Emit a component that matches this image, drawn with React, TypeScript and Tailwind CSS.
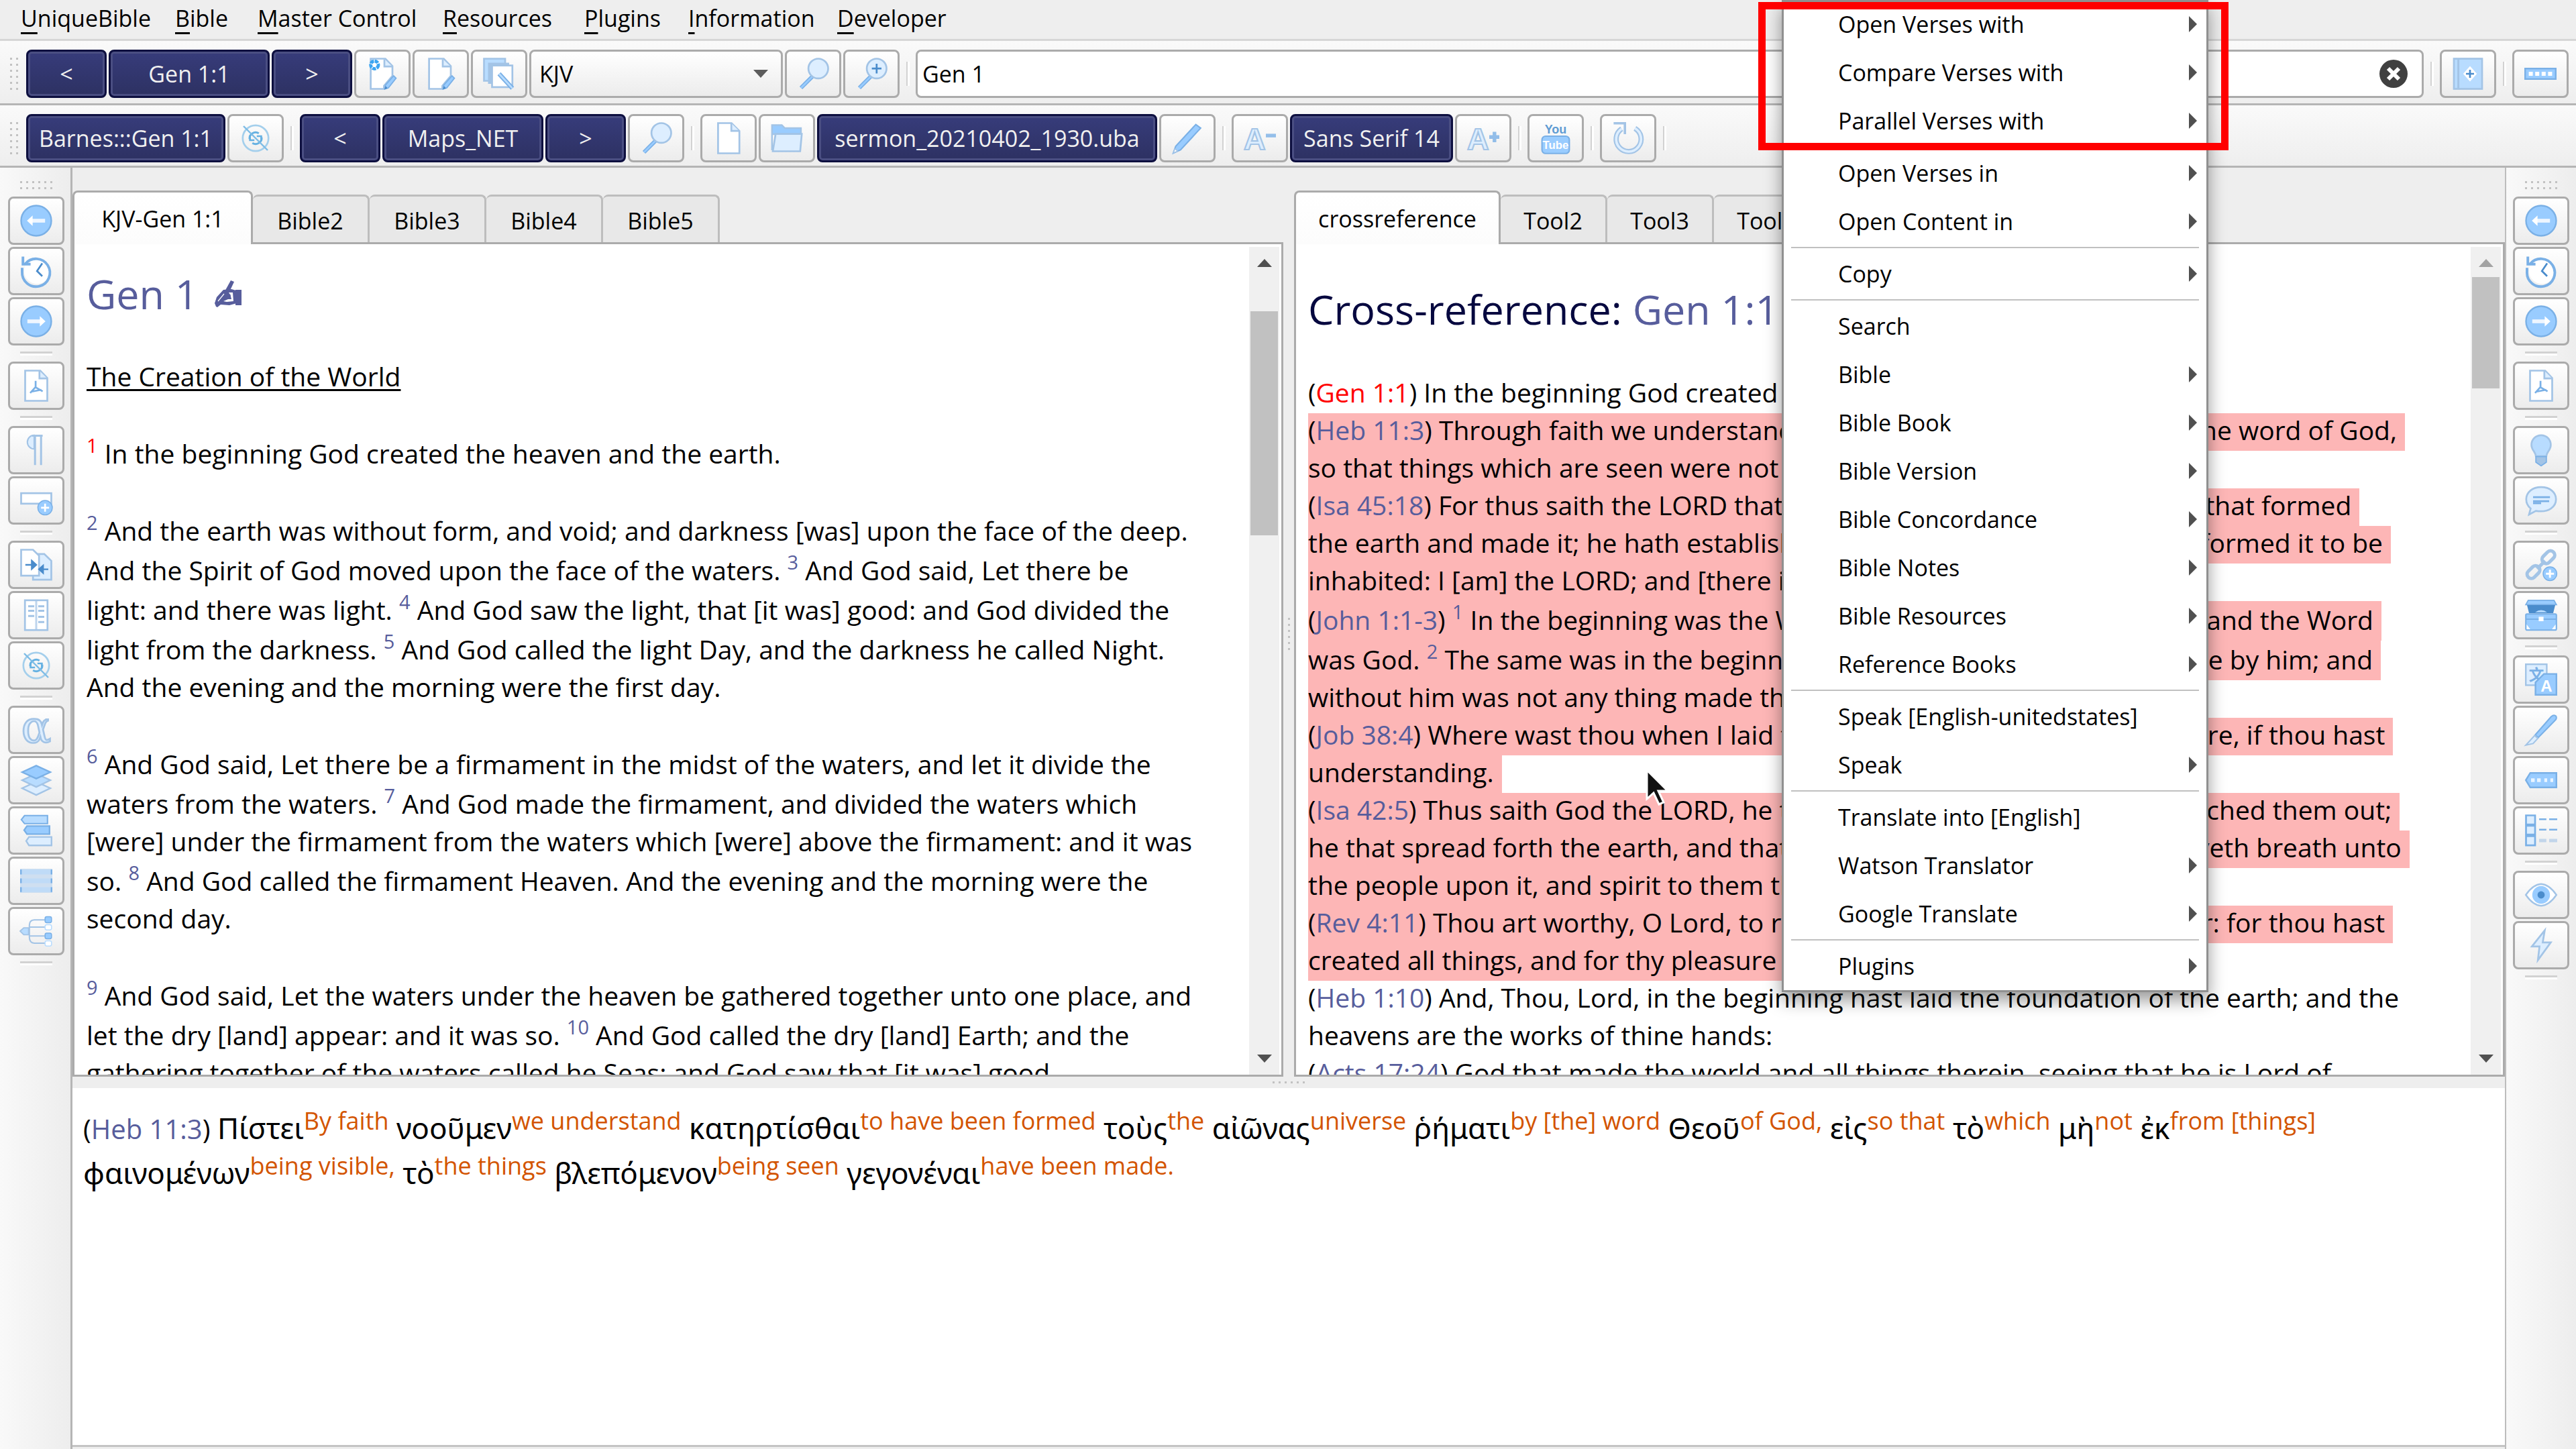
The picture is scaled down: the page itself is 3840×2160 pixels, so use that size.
import React from "react";

const LINE = "#a3c4e6";
const PALE = "#ddeeff";
const MID = "#99ccff";
const SOFT = "#b8dcff";
const DEEP = "#4a8ccc";
const EDGE = "#7ab0e6";

type Kids = { children: React.ReactNode };

function Svg({ children }: Kids) {
  return (
    <svg viewBox="0 0 16 16" className="size-12 overflow-visible" aria-hidden="true">
      {children}
    </svg>
  );
}

const penTip = (
  <>
    <path d="M9.5 13.6 13.6 9 14.8 10.2 11 15 9.2 15.6Z" fill={MID} stroke={EDGE} strokeWidth=".6" />
    <path d="M9 15.8 9.6 14 10.6 15.2Z" fill={DEEP} />
  </>
);

const sheet = (
  <>
    <path d="M2.2.5H9.5L13 4.2V9L8.8 14V15.5H2.2Z" fill="#fff" stroke={LINE} strokeWidth=".9" />
    <path d="M9 .8V4.4H13" fill={PALE} stroke={LINE} strokeWidth=".9" />
  </>
);

const magnifier = (
  <>
    <path d="M7.8 9.2 2 15" stroke={EDGE} strokeWidth="2" />
    <path d="M7.8 9.2 2 15" stroke={MID} strokeWidth=".9" />
    <circle cx="10.6" cy="5.4" r="4.9" fill={PALE} stroke={LINE} strokeWidth=".9" />
  </>
);

const icons: Record<string, React.ReactNode> = {
  noteStar: (
    <Svg>
      {sheet}
      {penTip}
      <circle cx="4.1" cy="3.6" r="1.9" fill="#fff" stroke="#3ba5f2" strokeWidth="1.6" strokeDasharray="1.8 .4" />
    </Svg>
  ),
  note: (
    <Svg>
      {sheet}
      {penTip}
    </Svg>
  ),
  notes: (
    <Svg>
      <path d="M.5.5H11V11.5H.5Z" fill={SOFT} stroke={LINE} strokeWidth=".9" />
      <path d="M2.5 2.5H13V13H2.5Z" fill={LINE} />
      <path d="M4.5 3.9H14.6V14.6H4.5Z" fill="#fff" stroke={LINE} strokeWidth=".9" />
      <path d="M8 8 14.6 15.2" stroke={EDGE} strokeWidth="2.2" />
      <path d="M8 8 14.6 15.2" stroke={SOFT} strokeWidth=".9" />
    </Svg>
  ),
  search: <Svg>{magnifier}</Svg>,
  searchPlus: (
    <Svg>
      {magnifier}
      <path d="M10.6 3V7.8M8.2 5.4H13" stroke={DEEP} strokeWidth=".9" />
    </Svg>
  ),
  sync: (
    <Svg>
      <circle cx="8" cy="8" r="6.4" fill="none" stroke="#a4cfec" strokeWidth=".9" />
      <path d="M5 8.4A3 3 0 0 1 9.6 5.6M11 7.6A3 3 0 0 1 6.4 10.4" fill="none" stroke="#66b1e2" strokeWidth="1" />
      <path d="M5.2 6.6V9H7.4M10.8 9.4V7H8.6" fill="none" stroke="#66b1e2" strokeWidth=".9" />
      <path d="M2 2 14 14" stroke="#7dbce6" strokeWidth=".8" />
    </Svg>
  ),
  file: (
    <Svg>
      <path d="M2.8.5H9.5L13.4 4.4V15.5H2.8Z" fill="#fff" stroke={LINE} strokeWidth=".9" />
      <path d="M9.4.6V4.4H13.3" fill={PALE} stroke={LINE} strokeWidth=".9" />
    </Svg>
  ),
  folder: (
    <Svg>
      <path d="M.6 14V1.5H5.5L7 3H15V6H.6Z" fill={MID} stroke={LINE} strokeWidth=".8" />
      <path d="M2.4 5.9H15.4L14.6 14.5H1Z" fill={PALE} stroke={LINE} strokeWidth=".9" />
    </Svg>
  ),
  pencil: (
    <Svg>
      <path d="M1 15.4 2.2 12 12.2 1.2 14.6 3 4.6 13.8Z" fill={MID} stroke={EDGE} strokeWidth=".7" />
      <path d="M1 15.4 1.8 13.2 3.2 14.4Z" fill="#fff" stroke={LINE} strokeWidth=".5" />
    </Svg>
  ),
  fontDown: (
    <Svg>
      <text x="0" y="13.6" fontFamily="Liberation Sans" fontWeight="700" fontSize="15" fill={PALE} stroke={LINE} strokeWidth=".7">A</text>
      <path d="M11 5.8H16V7.6H11Z" fill={EDGE} opacity=".8" />
    </Svg>
  ),
  fontUp: (
    <Svg>
      <text x="0" y="13.6" fontFamily="Liberation Sans" fontWeight="700" fontSize="15" fill={PALE} stroke={LINE} strokeWidth=".7">A</text>
      <path d="M13.6 4.8V10M11 7.4H16" stroke={EDGE} strokeWidth="1.8" opacity=".8" />
    </Svg>
  ),
  youtube: (
    <Svg>
      <text x="8" y="5.6" textAnchor="middle" fontFamily="Liberation Sans" fontWeight="700" fontSize="6" fill="#5f9cd3">You</text>
      <rect x="1.2" y="7" width="13.6" height="8.6" rx="1.8" fill={MID} stroke={EDGE} strokeWidth=".7" />
      <text x="8" y="13.4" textAnchor="middle" fontFamily="Liberation Sans" fontWeight="700" fontSize="5.6" fill="#fff">Tube</text>
    </Svg>
  ),
  reload: (
    <Svg>
      <path d="M4.8 3.3A6.2 6.2 0 1 0 11.4 3.1" fill="none" stroke={LINE} strokeWidth="2.6" />
      <path d="M4.8 3.3A6.2 6.2 0 1 0 11.4 3.1" fill="none" stroke={PALE} strokeWidth="1.2" />
      <path d="M.8.6H6.4V6" fill="none" stroke={LINE} strokeWidth="1.2" />
    </Svg>
  ),
  bookPlus: (
    <Svg>
      <rect x="1" y=".5" width="14" height="15" fill={SOFT} stroke={LINE} strokeWidth=".9" />
      <path d="M3.2.5V15.5" stroke={LINE} strokeWidth="1" />
      <path d="M9 4.2 12.4 8 9 11.8 5.6 8Z" fill="#fff" />
      <path d="M9 6V10M7 8H11" stroke={DEEP} strokeWidth=".9" />
    </Svg>
  ),
  toolbar: (
    <Svg>
      <rect x=".4" y="5.4" width="15.2" height="5.2" fill={MID} stroke={EDGE} strokeWidth=".8" />
      <path d="M2.2 7H4.2V9H2.2ZM5.4 7H7.4V9H5.4ZM8.6 7H10.6V9H8.6ZM11.8 7H13.8V9H11.8Z" fill="#fff" />
    </Svg>
  ),
  back: (
    <Svg>
      <circle cx="8" cy="8" r="7.5" fill={MID} stroke={EDGE} strokeWidth=".8" />
      <path d="M12.4 8H5" stroke="#eef6ff" strokeWidth="1.9" />
      <path d="M6.2 5.4V10.6L3.4 8Z" fill="#fff" />
    </Svg>
  ),
  forward: (
    <Svg>
      <circle cx="8" cy="8" r="7.5" fill={MID} stroke={EDGE} strokeWidth=".8" />
      <path d="M3.6 8H11" stroke="#eef6ff" strokeWidth="1.9" />
      <path d="M9.8 5.4V10.6L12.6 8Z" fill="#fff" />
    </Svg>
  ),
  history: (
    <Svg>
      <circle cx="8.4" cy="8" r="6.4" fill="#fff" />
      <path d="M2.6 4.4A6.9 6.9 0 1 1 1 8.4V6.4" fill="none" stroke={EDGE} strokeWidth="1.3" />
      <path d="M1.4.8V4.6H5.2" fill="none" stroke={EDGE} strokeWidth="1.3" />
      <path d="M11 4.2 8.4 8 11 10.6" fill="none" stroke={DEEP} strokeWidth=".9" />
    </Svg>
  ),
  pdf: (
    <Svg>
      <path d="M2.5.5H10L13.5 4.2V15.5H2.5Z" fill="#fff" stroke={LINE} strokeWidth=".9" />
      <path d="M9.6.6V4.4H13.5" fill={PALE} stroke={LINE} strokeWidth=".9" />
      <path d="M7.7 5.6V8.6L5 11.6M7.7 8.8 11.2 10.8M5.4 11 10.6 10" fill="none" stroke={EDGE} strokeWidth=".9" />
    </Svg>
  ),
  pilcrow: (
    <Svg>
      <path d="M7 .6A3.4 3.4 0 0 0 7 7.4Z" fill={PALE} stroke={LINE} strokeWidth=".7" />
      <path d="M6 .8H11.2M7.4.6V15.4M10.4.6V15.4" fill="none" stroke={LINE} strokeWidth="1" />
    </Svg>
  ),
  rowPlus: (
    <Svg>
      <rect x=".5" y="4.4" width="15" height="5.2" fill="#fff" stroke={LINE} strokeWidth=".9" />
      <circle cx="12.4" cy="11.6" r="3.6" fill={MID} stroke={EDGE} strokeWidth=".5" />
      <path d="M12.4 9.6V13.6M10.4 11.6H14.4" stroke="#fff" strokeWidth=".9" />
    </Svg>
  ),
  swapPages: (
    <Svg>
      <path d="M6.4 2.6H12L15.5 6V15.4H6.4Z" fill={PALE} stroke={LINE} strokeWidth=".9" />
      <path d="M.5.5H6.4L9.4 3.4V13.4H.5Z" fill="#fff" stroke={LINE} strokeWidth=".9" />
      <path d="M2.6 8H7M5.8 6 8 8 5.8 10ZM14 10.2H11M11.4 8.4 9.4 10.2 11.4 12Z" fill={DEEP} stroke={DEEP} strokeWidth=".8" />
    </Svg>
  ),
  columns: (
    <Svg>
      <rect x="2.4" y=".6" width="11.2" height="14.8" fill="#fff" stroke={LINE} strokeWidth=".9" />
      <path d="M8 .6V15.4" stroke={LINE} strokeWidth="1" opacity=".7" />
      <path d="M4 3.6H7M4 5.8H7M4 8.4H7M9 3.6H12M9 5.8H12M9 8.8H12M9 11.4H12" stroke={LINE} strokeWidth="1" />
    </Svg>
  ),
  alpha: (
    <Svg>
      <text x="8" y="14.4" textAnchor="middle" fontFamily="DejaVu Serif" fontSize="22" fill={PALE} stroke={LINE} strokeWidth=".9">α</text>
    </Svg>
  ),
  layers: (
    <Svg>
      <path d="M1 12 8 8.8 15 12 8 15.4Z" fill={PALE} stroke={LINE} strokeWidth=".8" />
      <path d="M1 8 8 4.8 15 8 8 11.4Z" fill={SOFT} stroke={LINE} strokeWidth=".8" />
      <path d="M1 4 8 .8 15 4 8 7.2Z" fill={MID} stroke={EDGE} strokeWidth=".8" />
    </Svg>
  ),
  tags: (
    <Svg>
      <path d="M.6 2.6 2.2.6H13.6V4.6H2.2Z" fill={SOFT} stroke={EDGE} strokeWidth=".7" />
      <path d="M2 7.8 3.4 5.8H14.6V9.8H3.4Z" fill={MID} stroke={EDGE} strokeWidth=".8" />
      <path d="M3 13.2 4.4 11.2H15.6V15.4H4.4Z" fill={PALE} stroke={LINE} strokeWidth=".8" />
    </Svg>
  ),
  rows: (
    <Svg>
      <rect x="0" y="2" width="16" height="12" fill="#cfdff0" />
      <path d="M0 3.6H16M0 8H16M0 12.4H16" stroke="#bfdbf7" strokeWidth="2.4" />
      <path d="M.4 2.4V4.8M.4 6.8V9.2M.4 11.2V13.6M15.6 2.4V4.8M15.6 6.8V9.2M15.6 11.2V13.6" stroke={EDGE} strokeWidth=".8" />
    </Svg>
  ),
  tree: (
    <Svg>
      <path d="M4 8H4.6M13 2.4H7Q4.6 2.6 4.6 5V11Q4.6 13.8 7 14H13M4.6 6H13M4.6 10.4H13" fill="none" stroke={LINE} strokeWidth=".7" />
      <path d="M0 8 1.8 6.4H4.2V9.8H1.8Z" fill={SOFT} stroke={LINE} strokeWidth=".6" />
      <rect x="12.4" y=".8" width="3.2" height="3" rx=".8" fill={MID} stroke={EDGE} strokeWidth=".5" />
      <rect x="12.4" y="4.8" width="3.2" height="2.6" rx=".8" fill="#fff" stroke={SOFT} strokeWidth=".5" />
      <rect x="12.4" y="9" width="3.2" height="2.8" rx=".8" fill={MID} stroke={EDGE} strokeWidth=".5" />
      <rect x="12.4" y="12.8" width="3.2" height="2.6" rx=".8" fill="#fff" stroke={SOFT} strokeWidth=".5" />
    </Svg>
  ),
  bulb: (
    <Svg>
      <path d="M8 .6A4.7 4.7 0 0 0 3.2 5.4C3.2 8 5.2 8.8 5.4 11H10.6C10.8 8.8 12.8 8 12.8 5.4A4.7 4.7 0 0 0 8 .6Z" fill={SOFT} stroke={LINE} strokeWidth=".9" />
      <path d="M5.4 11.2H10.6V14L8 15.8 5.4 14Z" fill={LINE} stroke={EDGE} strokeWidth=".6" />
    </Svg>
  ),
  comment: (
    <Svg>
      <path d="M8 1.4C3.6 1.4.6 4 .6 7.4 .6 9.6 1.6 11 2.8 12L2 15 5.4 13.2C12 14.2 15.4 11 15.4 7.4 15.4 4 12.4 1.4 8 1.4Z" fill={PALE} stroke={LINE} strokeWidth=".9" />
      <path d="M4 6.4H12.4M4 8.4H12M4 9.4H8" stroke={EDGE} strokeWidth=".9" />
    </Svg>
  ),
  linkPlus: (
    <Svg>
      <g fill="none" stroke={LINE} strokeWidth="1.7">
        <rect x="-3.6" y="-2.1" width="7.2" height="4.2" rx="2.1" transform="translate(11.6 4.2) rotate(-45)" />
        <rect x="-3.6" y="-2.1" width="7.2" height="4.2" rx="2.1" transform="translate(4.2 11.6) rotate(-45)" />
        <path d="M6 10 10 6" />
      </g>
      <circle cx="12.4" cy="12.4" r="3.4" fill={MID} stroke={EDGE} strokeWidth=".5" />
      <path d="M12.4 10.4V14.4M10.4 12.4H14.4" stroke="#fff" strokeWidth="1" />
    </Svg>
  ),
  chest: (
    <Svg>
      <path d="M1.6.6H14.4L15.6 2.8H.4Z" fill={MID} stroke={EDGE} strokeWidth=".6" />
      <path d="M1 3H15L14 7H2Z" fill={DEEP} />
      <path d="M5 6.6Q8 4.4 11 6.6Z" fill={SOFT} />
      <rect x=".4" y="7.4" width="15.2" height="8" rx=".6" fill={MID} stroke={EDGE} strokeWidth=".7" />
      <path d="M.4 10H15.6" stroke={EDGE} strokeWidth=".7" />
      <rect x="6.8" y="8.8" width="2.4" height="2.2" fill="#fff" />
      <path d="M.8 12.6 2.6 15H.8ZM15.2 12.6 13.4 15H15.2Z" fill="#fff" />
    </Svg>
  ),
  translate: (
    <Svg>
      <rect x=".4" y=".4" width="10.4" height="10.4" fill={PALE} stroke={LINE} strokeWidth=".8" />
      <text x="5.6" y="8.4" textAnchor="middle" fontFamily="Noto Sans CJK SC" fontSize="7.6" fontWeight="700" fill={EDGE}>文</text>
      <path d="M5.2 9.4 9.4 5.2H15.6V15.6H5.2Z" fill={MID} stroke={EDGE} strokeWidth=".8" />
      <text x="10.6" y="14" textAnchor="middle" fontFamily="Liberation Sans" fontSize="8" fontWeight="700" fill="#fff">A</text>
    </Svg>
  ),
  brush: (
    <Svg>
      <path d="M5 10.6 13 1.4Q14.4.2 15.4 1.2 16 2.4 14.8 3.4L6.6 11.8Z" fill={MID} stroke={EDGE} strokeWidth=".7" />
      <path d="M4.8 10.8 6.4 12.2 4 14.8.4 15.6Z" fill={PALE} stroke={LINE} strokeWidth=".7" />
    </Svg>
  ),
  label: (
    <Svg>
      <path d="M.4 8 2.6 4.4H15.6V11.6H2.6Z" fill={MID} stroke={EDGE} strokeWidth=".8" />
      <path d="M3 7.1H4.8V8.9H3ZM6 7.1H7.8V8.9H6ZM9.6 7.1H11V8.9H9.6ZM12.6 7.1H14V8.9H12.6Z" fill="#eaf5ff" />
    </Svg>
  ),
  list: (
    <Svg>
      <path d="M.5.5H5V5H.5ZM.5 5.6H5V10H.5ZM.5 10.8H5V15.4H.5Z" fill={PALE} stroke={EDGE} strokeWidth=".9" />
      <path d="M7 2.4H10.6M12 2.4H16M7 7.6H10.6M12 7.6H16" stroke={EDGE} strokeWidth=".8" />
      <path d="M7 13H10.6M12 13H16" stroke={LINE} strokeWidth="1.6" opacity=".6" />
    </Svg>
  ),
  eye: (
    <Svg>
      <path d="M.4 8Q4 2.8 8 2.6 12 2.8 15.6 8 12 13.2 8 13.4 4 13.2.4 8Z" fill="#fff" stroke={LINE} strokeWidth=".8" />
      <circle cx="8" cy="8" r="4.4" fill={MID} />
      <circle cx="8" cy="8" r="1.8" fill={DEEP} />
    </Svg>
  ),
  flash: (
    <Svg>
      <path d="M9.8.6 3.4 8.6H7.2L6.4 15.4 12.8 6.6H8.8Z" fill={PALE} stroke={LINE} strokeWidth=".9" />
    </Svg>
  ),
};

function IconButton({ name, label }: { name: string; label: string }) {
  return (
    <button
      aria-label={label}
      className="flex h-[72px] w-[84px] shrink-0 items-center justify-center rounded-lg border-[3px] border-[#ababab] bg-linear-to-b from-white to-[#ececec]"
    >
      {icons[name]}
    </button>
  );
}

function DarkButton({ children, className }: Kids & { className: string }) {
  return (
    <button
      className={`h-[72px] shrink-0 rounded-lg border-[3px] border-[#0d0f3f] bg-linear-to-b from-[#373c7b] to-[#2d3162] whitespace-nowrap text-[#f0f0f0] inset-ring-[3px] inset-ring-[#4a4e82] ${className}`}
    >
      {children}
    </button>
  );
}

function VSep() {
  return (
    <div className="flex h-9 w-[18px] shrink-0 justify-center">
      <div className="w-[2px] bg-[#d2d2d2]" />
      <div className="w-[3px] bg-white" />
    </div>
  );
}

function HSep() {
  return (
    <div className="flex h-[18px] flex-col items-center justify-center">
      <div className="h-[3px] w-12 bg-[#d2d2d2]" />
      <div className="h-[3px] w-12 bg-white" />
    </div>
  );
}

function Dots({ cols, rows }: { cols: number; rows: number }) {
  return (
    <div className="flex flex-col gap-[6px]">
      {Array.from({ length: rows }, (_, r) => (
        <div key={r} className="flex gap-[6px]">
          {Array.from({ length: cols }, (_, c) => (
            <div key={c} className="size-[3px] bg-[#c2c2c2]" />
          ))}
        </div>
      ))}
    </div>
  );
}

const menus: [string, string][] = [
  ["UniqueBible", "w-[230px]"],
  ["Bible", "w-[123px]"],
  ["Master Control", "w-[276px]"],
  ["Resources", "w-[211px]"],
  ["Plugins", "w-[155px]"],
  ["Information", "w-[222px]"],
  ["Developer", "w-[212px]"],
];

const leftBar: [string, string][] = [
  ["back", "Previous chapter"],
  ["history", "Bible history"],
  ["forward", "Next chapter"],
  ["", ""],
  ["pdf", "Export Bible view to PDF"],
  ["", ""],
  ["pilcrow", "Paragraph view"],
  ["rowPlus", "Subheadings"],
  ["", ""],
  ["swapPages", "Synchronise panes"],
  ["columns", "Parallel view"],
  ["sync", "Reference sync"],
  ["", ""],
  ["alpha", "Original language"],
  ["layers", "Interlinear"],
  ["tags", "Morphology"],
  ["rows", "Compare rows"],
  ["tree", "Translation tree"],
  ["", ""],
];

const rightBar: [string, string][] = [
  ["back", "Previous study"],
  ["history", "Study history"],
  ["forward", "Next study"],
  ["", ""],
  ["pdf", "Export study view to PDF"],
  ["", ""],
  ["bulb", "Indexes"],
  ["comment", "Commentary"],
  ["", ""],
  ["linkPlus", "Cross-references"],
  ["chest", "Treasury"],
  ["", ""],
  ["translate", "Translations"],
  ["brush", "Discourse"],
  ["label", "Words"],
  ["list", "Combined features"],
  ["", ""],
  ["eye", "Highlight"],
  ["flash", "Instant lookup"],
  ["", ""],
];

function SideBar({ items, className, label }: { items: [string, string][]; className: string; label: string }) {
  return (
    <aside
      aria-label={label}
      className={`flex shrink-0 flex-col items-center gap-[3px] bg-linear-to-r from-[#f9f9f9] to-[#ededed] pt-5 ${className}`}
    >
      <div className="mb-2">
        <Dots cols={6} rows={2} />
      </div>
      {items.map(([name, text], i) => (name ? <IconButton key={i} name={name} label={text} /> : <HSep key={i} />))}
    </aside>
  );
}

function Tabs({ tabs, first, rest }: { tabs: string[]; first: string; rest: string }) {
  return (
    <div role="tablist" className="relative z-10 -mb-[3px] flex h-20 items-end">
      <button
        role="tab"
        aria-selected="true"
        className={`h-20 rounded-t-lg border-[3px] border-b-0 border-[#ababab] bg-linear-to-b from-white to-[#fcfcfc] ${first}`}
      >
        {tabs[0]}
      </button>
      {tabs.slice(1).map((t) => (
        <button
          key={t}
          role="tab"
          aria-selected="false"
          className={`mb-[3px] h-[71px] rounded-t-lg border-t-[3px] border-r-[3px] border-[#bdbdbd] bg-[#e8e8e8] pt-1 ${rest}`}
        >
          {t}
        </button>
      ))}
    </div>
  );
}

function ScrollBar({ lead, thumb, dim }: { lead: string; thumb: string; dim?: boolean }) {
  return (
    <div className="mt-1 mr-[3px] flex w-[45px] shrink-0 flex-col items-center bg-[#f0f0f0]">
      <svg viewBox="0 0 22 12" className="mt-[18px] h-3 w-[22px] shrink-0">
        <path d="M0 12 11 0 22 12Z" fill={dim ? "#a3a3a3" : "#505050"} />
      </svg>
      <div className={`w-[41px] shrink-0 bg-[#c1c1c1] ${lead} ${thumb}`} />
      <svg viewBox="0 0 22 12" className="mt-auto mb-[18px] h-3 w-[22px] shrink-0">
        <path d="M0 0H22L11 12Z" fill="#505050" />
      </svg>
    </div>
  );
}

function Sup({ children, red }: Kids & { red?: boolean }) {
  return (
    <span className={`align-[16px] text-[29px] leading-[24px] ${red ? "text-[#ff0000]" : "text-[#575d9c]"}`}>{children}</span>
  );
}

function Ref({ children, red }: Kids & { red?: boolean }) {
  return (
    <>
      (
      <a href="#ref" className={red ? "text-[#ff0000]" : "text-[#575d9c]"}>
        {children}
      </a>
      )
    </>
  );
}

const verses: React.ReactNode[][] = [
  [<><Sup red>1</Sup> In the beginning God created the heaven and the earth.</>],
  [
    <><Sup>2</Sup> And the earth was without form, and void; and darkness [was] upon the face of the deep.</>,
    <>And the Spirit of God moved upon the face of the waters. <Sup>3</Sup> And God said, Let there be</>,
    <>light: and there was light. <Sup>4</Sup> And God saw the light, that [it was] good: and God divided the</>,
    <>light from the darkness. <Sup>5</Sup> And God called the light Day, and the darkness he called Night.</>,
    "And the evening and the morning were the first day.",
  ],
  [
    <><Sup>6</Sup> And God said, Let there be a firmament in the midst of the waters, and let it divide the</>,
    <>waters from the waters. <Sup>7</Sup> And God made the firmament, and divided the waters which</>,
    "[were] under the firmament from the waters which [were] above the firmament: and it was",
    <>so. <Sup>8</Sup> And God called the firmament Heaven. And the evening and the morning were the</>,
    "second day.",
  ],
  [
    <><Sup>9</Sup> And God said, Let the waters under the heaven be gathered together unto one place, and</>,
    <>let the dry [land] appear: and it was so. <Sup>10</Sup> And God called the dry [land] Earth; and the</>,
    "gathering together of the waters called he Seas: and God saw that [it was] good.",
  ],
];

type RefLine = { text: React.ReactNode; mark?: boolean; sup?: boolean };
const refLines: RefLine[] = [
  { text: <><Ref red>Gen 1:1</Ref> In the beginning God created the heaven and the earth.</> },
  { mark: true, text: <><Ref>Heb 11:3</Ref> Through faith we understand that the worlds were framed by the word of God,</> },
  { mark: true, text: "so that things which are seen were not made of things which do appear." },
  { mark: true, text: <><Ref>Isa 45:18</Ref> For thus saith the LORD that created the heavens; God himself that formed</> },
  { mark: true, text: "the earth and made it; he hath established it, he created it not in vain, he formed it to be" },
  { mark: true, text: "inhabited: I [am] the LORD; and [there is] none else." },
  { mark: true, sup: true, text: <><Ref>John 1:1-3</Ref> <Sup>1</Sup> In the beginning was the Word, and the Word was with God, and the Word</> },
  { mark: true, sup: true, text: <>was God. <Sup>2</Sup> The same was in the beginning with God. <Sup>3</Sup> All things were made by him; and</> },
  { mark: true, text: "without him was not any thing made that was made." },
  { mark: true, text: <><Ref>Job 38:4</Ref> Where wast thou when I laid the foundations of the earth? declare, if thou hast</> },
  { mark: true, text: "understanding." },
  { mark: true, text: <><Ref>Isa 42:5</Ref> Thus saith God the LORD, he that created the heavens, and stretched them out;</> },
  { mark: true, text: "he that spread forth the earth, and that which cometh out of it; he that giveth breath unto" },
  { mark: true, text: "the people upon it, and spirit to them that walk therein:" },
  { mark: true, text: <><Ref>Rev 4:11</Ref> Thou art worthy, O Lord, to receive glory and honour and power: for thou hast</> },
  { mark: true, text: "created all things, and for thy pleasure they are and were created." },
  { text: <><Ref>Heb 1:10</Ref> And, Thou, Lord, in the beginning hast laid the foundation of the earth; and the</> },
  { text: "heavens are the works of thine hands:" },
  { text: <><Ref>Acts 17:24</Ref> God that made the world and all things therein, seeing that he is Lord of</> },
];

const greek: [string, string][][] = [
  [
    ["Πίστει", "By faith"],
    ["νοοῦμεν", "we understand"],
    ["κατηρτίσθαι", "to have been formed"],
    ["τοὺς", "the"],
    ["αἰῶνας", "universe"],
    ["ῥήματι", "by [the] word"],
    ["Θεοῦ", "of God,"],
    ["εἰς", "so that"],
    ["τὸ", "which"],
    ["μὴ", "not"],
    ["ἐκ", "from [things]"],
  ],
  [
    ["φαινομένων", "being visible,"],
    ["τὸ", "the things"],
    ["βλεπόμενον", "being seen"],
    ["γεγονέναι", "have been made."],
  ],
];

const contextMenu: [string, boolean][][] = [
  [["Open Verses with", true], ["Compare Verses with", true], ["Parallel Verses with", true]],
  [["Open Verses in", true], ["Open Content in", true]],
  [["Copy", true]],
  [
    ["Search", false],
    ["Bible", true],
    ["Bible Book", true],
    ["Bible Version", true],
    ["Bible Concordance", true],
    ["Bible Notes", true],
    ["Bible Resources", true],
    ["Reference Books", true],
  ],
  [["Speak [English-unitedstates]", false], ["Speak", true]],
  [["Translate into [English]", false], ["Watson Translator", true], ["Google Translate", true]],
  [["Plugins", true]],
];

function WritingHand() {
  return (
    <svg viewBox="0 0 40 40" className="inline-block size-10" aria-hidden="true">
      <path d="M24 0 29 2 22 17 16 26 11 27 13 20Z" fill="#575d9c" />
      <path d="M0 34 3 25 13 14 25 13 32 15 33 34 22 37 9 36 4 40 2 39Z" fill="#575d9c" />
      <path d="M21 18 27 18 28 31 18 32 13 31 20 28 24 23Z" fill="#fff" />
      <path d="M5 31 14 20" stroke="#fff" strokeWidth="1.2" />
      <path d="M19 28 23 20 25 28Z" fill="#575d9c" />
      <path d="M31 14H40V37H31Z" fill="#575d9c" />
    </svg>
  );
}

export default function App() {
  return (
    <div className="relative flex h-screen flex-col overflow-hidden bg-[#eeeeee] font-['Open_Sans',sans-serif] text-[34px] leading-[48px] text-black">
      <nav className="flex h-[61px] shrink-0 border-b-[3px] border-[#d6d6d6]">
        {menus.map(([m, w]) => (
          <button key={m} className={`pb-1 pl-[31px] text-left whitespace-nowrap ${w}`}>
            <span className="underline decoration-[3px] underline-offset-[8px]">{m[0]}</span>
            {m.slice(1)}
          </button>
        ))}
      </nav>

      <div className="flex h-24 shrink-0 items-center gap-[3px] border-b-[3px] border-[#b5b5b5] bg-linear-to-b from-[#fafafa] to-[#eeeeee] pt-[4px] pr-[11px] pl-[15px]">
        <div className="mr-[9px]">
          <Dots cols={2} rows={6} />
        </div>
        <DarkButton className="w-[120px]">&lt;</DarkButton>
        <DarkButton className="w-[240px]">Gen 1:1</DarkButton>
        <DarkButton className="w-[120px]">&gt;</DarkButton>
        <IconButton name="noteStar" label="Chapter notes" />
        <IconButton name="note" label="Verse notes" />
        <IconButton name="notes" label="All notes" />
        <div className="relative">
          <select
            aria-label="Bible version"
            className="h-[72px] w-[378px] appearance-none rounded-lg border-[3px] border-[#ababab] bg-linear-to-b from-white to-[#ececec] pl-[12px]"
          >
            <option>KJV</option>
          </select>
          <svg viewBox="0 0 22 12" className="pointer-events-none absolute top-[30px] right-[22px] h-3 w-[22px]">
            <path d="M0 0H22L11 12Z" fill="#5c5c5c" />
          </svg>
        </div>
        <IconButton name="search" label="Search Bible" />
        <IconButton name="searchPlus" label="Advanced search" />
        <VSep />
        <div className="relative min-w-0 flex-1">
          <input
            aria-label="Command"
            defaultValue="Gen 1"
            className="h-[72px] w-full rounded-lg border-[3px] border-[#ababab] bg-white pl-[7px]"
          />
          <button aria-label="Clear" className="absolute top-[15px] right-6">
            <svg viewBox="0 0 42 42" className="size-[42px]">
              <circle cx="21" cy="21" r="21" fill="#404040" />
              <path d="M13 13 29 29M29 13 13 29" stroke="#fff" strokeWidth="6" />
            </svg>
          </button>
        </div>
        <VSep />
        <IconButton name="bookPlus" label="Add to library" />
        <VSep />
        <IconButton name="toolbar" label="Toggle toolbars" />
      </div>

      <div className="flex h-[93px] shrink-0 items-center gap-[3px] border-b-[3px] border-[#b5b5b5] bg-linear-to-b from-[#fafafa] to-[#eeeeee] pt-[8px] pl-[15px]">
        <div className="mr-[9px]">
          <Dots cols={2} rows={6} />
        </div>
        <DarkButton className="w-[297px]">Barnes:::Gen 1:1</DarkButton>
        <IconButton name="sync" label="Sync commentary" />
        <VSep />
        <DarkButton className="w-[120px]">&lt;</DarkButton>
        <DarkButton className="w-[240px]">Maps_NET</DarkButton>
        <DarkButton className="w-[120px]">&gt;</DarkButton>
        <IconButton name="search" label="Search book" />
        <VSep />
        <IconButton name="file" label="New file" />
        <IconButton name="folder" label="Open file" />
        <DarkButton className="w-[507px]">sermon_20210402_1930.uba</DarkButton>
        <IconButton name="pencil" label="Edit file" />
        <VSep />
        <IconButton name="fontDown" label="Smaller text" />
        <DarkButton className="w-[243px]">Sans Serif 14</DarkButton>
        <IconButton name="fontUp" label="Larger text" />
        <VSep />
        <IconButton name="youtube" label="YouTube" />
        <VSep />
        <IconButton name="reload" label="Reload" />
        <VSep />
      </div>

      <div className="flex min-h-0 flex-1">
        <SideBar items={leftBar} label="Bible tools" className="w-[108px] border-r-[3px] border-[#b5b5b5] pl-[3px]" />

        <main className="flex min-w-0 flex-1 flex-col">
          <div className="flex h-[1355px] shrink-0 pt-[34px]">
            <section className="flex min-w-0 flex-1 flex-col">
              <Tabs tabs={["KJV-Gen 1:1", "Bible2", "Bible3", "Bible4", "Bible5"]} first="w-[269px]" rest="w-[174px]" />
              <div className="flex min-h-0 flex-1 border-[3px] border-[#ababab] bg-white">
                <article className="min-w-0 flex-1 overflow-hidden pt-[33px] pl-[18px] text-[39px] leading-[56px] whitespace-nowrap">
                  <h1 className="mb-[54px] flex items-center gap-6 text-[61px] leading-[82px] text-[#575d9c]">
                    <span>Gen 1</span>
                    <WritingHand />
                  </h1>
                  <h2 className="underline decoration-[3px] underline-offset-[4px]">The Creation of the World</h2>
                  {verses.map((group, g) => (
                    <div key={g} className="mt-14">
                      {group.map((line, i) => (
                        <p key={i} className={typeof line === "string" ? "" : "pt-[3px]"}>
                          {line}
                        </p>
                      ))}
                    </div>
                  ))}
                </article>
                <ScrollBar lead="mt-[66px]" thumb="h-[334px]" />
              </div>
            </section>

            <div className="flex w-4 shrink-0 items-center justify-center">
              <Dots cols={1} rows={6} />
            </div>

            <section className="flex min-w-0 flex-1 flex-col">
              <Tabs tabs={["crossreference", "Tool2", "Tool3", "Tool4"]} first="w-[308px]" rest="w-[159px]" />
              <div className="flex min-h-0 flex-1 border-[3px] border-[#ababab] bg-white">
                <article className="min-w-0 flex-1 overflow-hidden pt-[56px] pl-[18px] text-[39px] leading-[50px] whitespace-nowrap">
                  <h1 className="mb-[58px] text-[61px] leading-[82px] text-[#06083f]">
                    Cross-reference: <a href="#gen" className="text-[#575d9c]">Gen 1:1</a>
                  </h1>
                  {refLines.map((l, i) => (
                    <p
                      key={i}
                      className={`w-fit pr-[12px] pb-[6px] ${l.sup ? "pt-[3px]" : ""} ${l.mark ? "bg-[#fdb6b6]" : ""}`}
                    >
                      {l.text}
                    </p>
                  ))}
                </article>
                <ScrollBar lead="mt-[15px]" thumb="h-[166px]" dim />
              </div>
            </section>
          </div>

          <div className="flex h-[17px] shrink-0 items-center justify-center">
            <Dots cols={6} rows={1} />
          </div>

          <section className="mb-[3px] flex-1 border-b-[3px] border-[#c4c4c4] bg-white pt-[26px] pl-4 font-['Noto_Sans',sans-serif] text-[44px] leading-[67px] whitespace-nowrap">
            {greek.map((line, i) => (
              <p key={i}>
                {i === 0 && (
                  <span className="font-['Open_Sans'] text-[40px] leading-none">
                    <Ref>Heb 11:3</Ref>{" "}
                  </span>
                )}
                {line.map(([word, gloss]) => (
                  <React.Fragment key={word}>
                    {word}
                    <span className="align-[14px] font-['Open_Sans'] text-[36px] leading-none text-[#d35400]">{gloss}</span>{" "}
                  </React.Fragment>
                ))}
              </p>
            ))}
          </section>
        </main>

        <SideBar items={rightBar} label="Study tools" className="w-[106px] border-l-[2px] border-[#bdbdbd]" />
      </div>

      <svg viewBox="0 0 36 56" className="absolute top-[1146px] left-[2453px] z-20 h-14 w-9" aria-hidden="true">
        <path d="M2 2V45L12 36 20 53 27 50 19 33H33Z" fill="#111" stroke="#fff" strokeWidth="3" />
      </svg>

      <div
        role="menu"
        className="absolute top-0 left-[2656px] z-20 w-[636px] border-[3px] border-[#909090] bg-white shadow-[0_12px_24px_rgba(0,0,0,0.4)]"
      >
        <div className="-mt-[3px]">
          {contextMenu.map((group, g) => (
            <div key={g}>
              {g > 0 && (
                <div className="flex h-[6px] items-center px-[11px]">
                  <div className="h-[2px] flex-1 bg-[#c0c0c0]" />
                </div>
              )}
              {group.map(([text, sub]) => (
                <button
                  key={text}
                  role="menuitem"
                  className="flex h-[72px] w-full items-center justify-between pr-[14px] pl-[81px] whitespace-nowrap"
                >
                  <span>{text}</span>
                  {sub && (
                    <svg viewBox="0 0 12 24" className="h-6 w-3">
                      <path d="M0 0 12 12 0 24Z" fill="#505050" />
                    </svg>
                  )}
                </button>
              ))}
            </div>
          ))}
        </div>
      </div>
      <div className="pointer-events-none absolute top-[3px] left-[2621px] z-30 h-[221px] w-[701px] border-[11px] border-[#ff0000]" />
    </div>
  );
}
